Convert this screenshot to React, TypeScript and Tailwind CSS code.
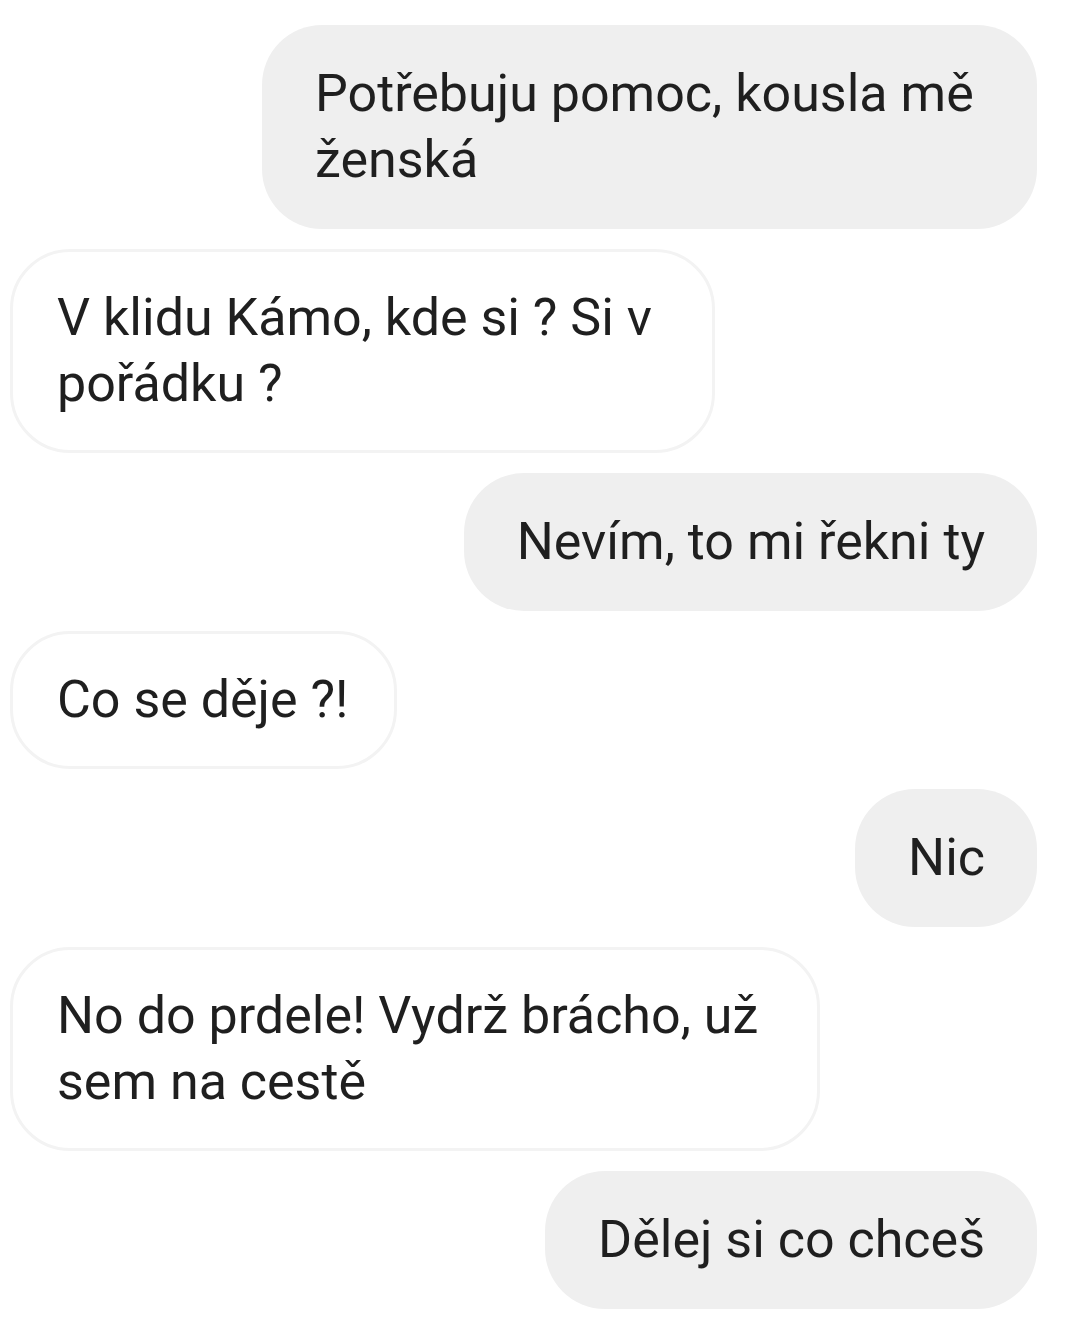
import React from "react";

const messages = [
  { me: true, lines: ["Potřebuju pomoc, kousla mě", "ženská"], w: "w-[775px]" },
  { me: false, lines: ["V klidu Kámo, kde si ? Si v", "pořádku ?"], w: "w-[705px]" },
  { me: true, lines: ["Nevím, to mi řekni ty"], w: "w-fit" },
  { me: false, lines: ["Co se děje ?!"], w: "w-fit" },
  { me: true, lines: ["Nic"], w: "w-fit" },
  { me: false, lines: ["No do prdele! Vydrž brácho, už", "sem na cestě"], w: "w-[810px]" },
  { me: true, lines: ["Dělej si co chceš"], w: "w-fit" },
];

const App = () => {
  return (
    <div className="w-[1080px] h-[1325px] bg-white overflow-hidden pt-[25px] flex flex-col gap-[20px] font-['Roboto',sans-serif]">
      {messages.map((m, i) =>
        m.me ? (
          <div key={i} className="flex justify-end pr-[43px]">
            <div className={`${m.w} bg-[#efefef] rounded-[60px] pl-[53px] pr-[52px] py-[36px] text-[52px] leading-[66px] text-[#1f1f1f] whitespace-nowrap`}>
              {m.lines.map((l, j) => (
                <div key={j}>{l}</div>
              ))}
            </div>
          </div>
        ) : (
          <div key={i} className="flex justify-start pl-[10px]">
            <div className={`${m.w} bg-white border-[3px] border-[#f3f3f3] rounded-[60px] pl-[44px] pr-[45px] py-[33px] text-[52px] leading-[66px] text-[#1f1f1f] whitespace-nowrap`}>
              {m.lines.map((l, j) => (
                <div key={j}>{l}</div>
              ))}
            </div>
          </div>
        )
      )}
    </div>
  );
};

export default App;
